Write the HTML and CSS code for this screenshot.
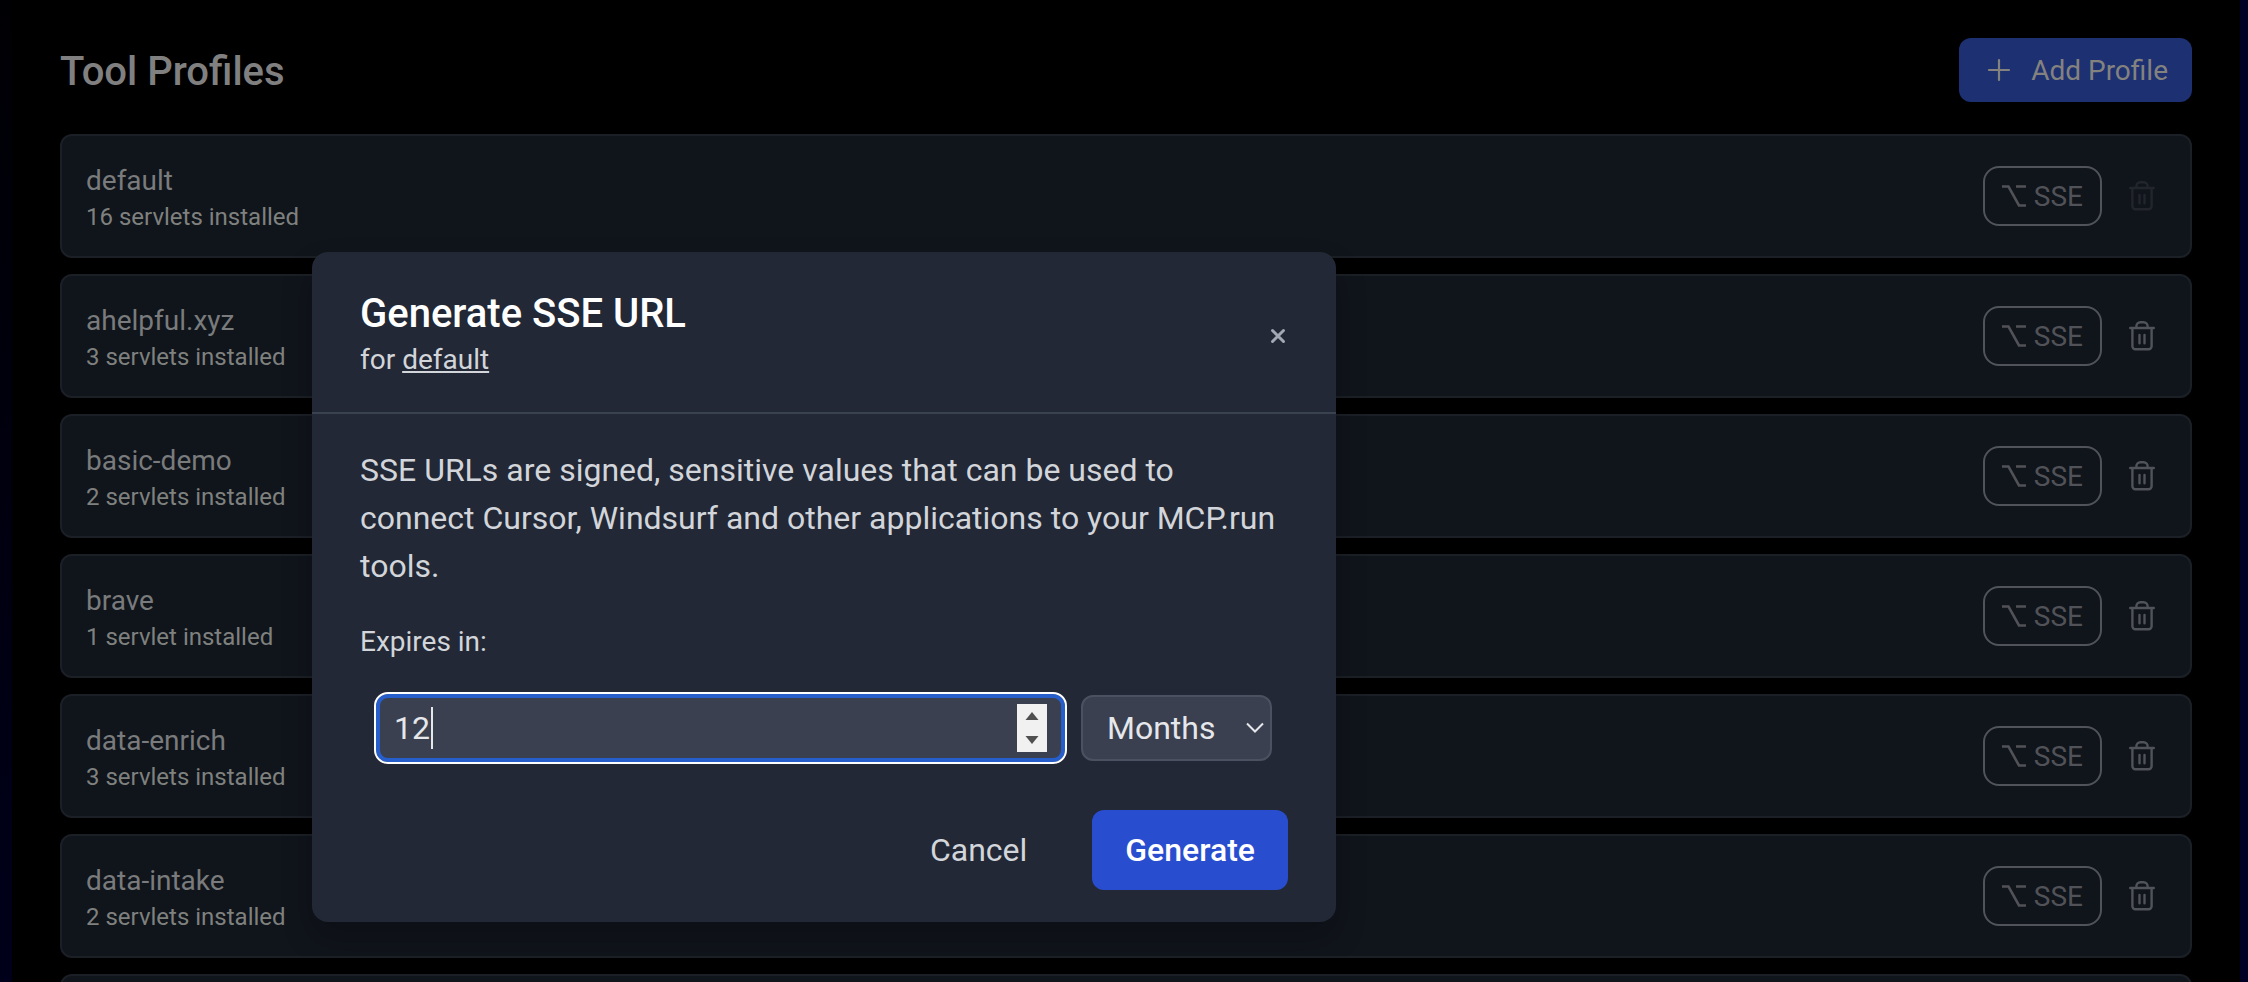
FILE: index.html
```html
<!DOCTYPE html>
<html lang="en">
<head>
<meta charset="utf-8">
<title>Tool Profiles</title>
<link rel="stylesheet" href="styles.css">
</head>
<body>
<svg class="sprite" aria-hidden="true">
  <symbol id="trash" viewBox="0 0 32 32">
    <g fill="none" stroke="currentColor" stroke-width="2.4" stroke-linecap="round" stroke-linejoin="round">
      <path d="M4.2 8h23.6M6.4 8v18.2a3 3 0 0 0 3 3h13.2a3 3 0 0 0 3-3V8M10.4 7.600V6.200a4 4 0 0 1 4-4h3.200a4 4 0 0 1 4 4v1.400M13.500 15v8.200M18.500 15v8.200"/>
    </g>
  </symbol>
  <symbol id="option" viewBox="0 0 24 22">
    <path d="M0 1.500h6.500L17 20.500h7M14 1.500h10" fill="none" stroke="currentColor" stroke-width="2.600"/>
  </symbol>
</svg>

<main class="panel">
  <header class="panel-header">
    <h1 class="panel-title">Tool Profiles</h1>
    <button class="add-button" type="button">
      <svg class="add-icon" viewBox="0 0 32 32" aria-hidden="true"><path d="M16 6v20M6 16h20" fill="none" stroke="currentColor" stroke-width="2.200" stroke-linecap="round"/></svg>
      Add Profile
    </button>
  </header>
  <ul class="profiles">
    <li class="profile">
      <div class="profile-text"><div class="profile-name">default</div><div class="profile-count">16 servlets installed</div></div>
      <button class="sse-button" type="button"><svg class="option-icon" aria-hidden="true"><use href="#option"/></svg>SSE</button>
      <button class="trash-button" type="button" aria-label="Delete default" disabled><svg class="trash-icon"><use href="#trash"/></svg></button>
    </li>
    <li class="profile">
      <div class="profile-text"><div class="profile-name">ahelpful.xyz</div><div class="profile-count">3 servlets installed</div></div>
      <button class="sse-button" type="button"><svg class="option-icon" aria-hidden="true"><use href="#option"/></svg>SSE</button>
      <button class="trash-button" type="button" aria-label="Delete ahelpful.xyz"><svg class="trash-icon"><use href="#trash"/></svg></button>
    </li>
    <li class="profile">
      <div class="profile-text"><div class="profile-name">basic-demo</div><div class="profile-count">2 servlets installed</div></div>
      <button class="sse-button" type="button"><svg class="option-icon" aria-hidden="true"><use href="#option"/></svg>SSE</button>
      <button class="trash-button" type="button" aria-label="Delete basic-demo"><svg class="trash-icon"><use href="#trash"/></svg></button>
    </li>
    <li class="profile">
      <div class="profile-text"><div class="profile-name">brave</div><div class="profile-count">1 servlet installed</div></div>
      <button class="sse-button" type="button"><svg class="option-icon" aria-hidden="true"><use href="#option"/></svg>SSE</button>
      <button class="trash-button" type="button" aria-label="Delete brave"><svg class="trash-icon"><use href="#trash"/></svg></button>
    </li>
    <li class="profile">
      <div class="profile-text"><div class="profile-name">data-enrich</div><div class="profile-count">3 servlets installed</div></div>
      <button class="sse-button" type="button"><svg class="option-icon" aria-hidden="true"><use href="#option"/></svg>SSE</button>
      <button class="trash-button" type="button" aria-label="Delete data-enrich"><svg class="trash-icon"><use href="#trash"/></svg></button>
    </li>
    <li class="profile">
      <div class="profile-text"><div class="profile-name">data-intake</div><div class="profile-count">2 servlets installed</div></div>
      <button class="sse-button" type="button"><svg class="option-icon" aria-hidden="true"><use href="#option"/></svg>SSE</button>
      <button class="trash-button" type="button" aria-label="Delete data-intake"><svg class="trash-icon"><use href="#trash"/></svg></button>
    </li>
    <li class="profile profile-empty"></li>
  </ul>
</main>

<div class="modal" role="dialog" aria-modal="true" aria-labelledby="modal-title">
  <header class="modal-header">
    <div>
      <h2 class="modal-title" id="modal-title">Generate SSE URL</h2>
      <p class="modal-subtitle">for <span class="modal-profile">default</span></p>
    </div>
    <button class="close-button" type="button" aria-label="Close">
      <svg class="close-icon" viewBox="0 0 20 20" aria-hidden="true"><path d="M4.500 4.500l11 11M15.500 4.500l-11 11" fill="none" stroke="currentColor" stroke-width="3" stroke-linecap="round"/></svg>
    </button>
  </header>
  <form class="modal-body">
    <p class="modal-text">SSE URLs are signed, sensitive values that can be used to connect Cursor, Windsurf and other applications to your MCP.run tools.</p>
    <label class="expiry-label" for="expiry">Expires in:</label>
    <div class="expiry-row">
      <div class="amount">
        <input class="amount-input" id="expiry" type="number" value="12">
        <span class="caret"></span>
        <svg class="spinner" viewBox="0 0 30 48" aria-hidden="true"><path fill="#f1f1f1" d="M0 0h30v48H0z"/><path fill="#505050" d="M8.500 16L15 8l6.500 8zM8.500 32L15 40l6.500-8z"/></svg>
      </div>
      <div class="unit">
        <select class="unit-select" aria-label="Unit"><option>Months</option></select>
        <svg class="unit-arrow" viewBox="0 0 18 12" aria-hidden="true"><path d="M1 1.500l8 8 8-8" fill="none" stroke="currentColor" stroke-width="2"/></svg>
      </div>
    </div>
    <div class="modal-actions">
      <button class="cancel-button" type="button">Cancel</button>
      <button class="generate-button" type="submit">Generate</button>
    </div>
  </form>
</div>
</body>
</html>
```
FILE: styles.css
```css
* { box-sizing: border-box; }

html { height: 100%; }

body {
  margin: 0;
  height: 100%;
  padding: 0 8px 0 12px;
  overflow: hidden;
  background:
    linear-gradient(#000024, #000024) right / 8px 100% no-repeat,
    linear-gradient(#000004, #00001a);
  font-family: Roboto, "Liberation Sans", sans-serif;
  font-size: 28px;
}

button, input, select { margin: 0; font: inherit; color: inherit; }
button { border: 0; background: none; padding: 0; }
h1, h2, p, ul { margin: 0; padding: 0; font-weight: 400; }

.sprite { position: absolute; width: 0; height: 0; }

.panel {
  height: 100%;
  padding: 38px 48px 0;
  overflow: hidden;
  background: #000;
}

.panel-header {
  display: flex;
  align-items: center;
  justify-content: space-between;
  margin-bottom: 32px;
}

.panel-title { padding-top: 4px; font-size: 40px; line-height: 48px; font-weight: 500; color: #808080; }

.add-button {
  display: flex;
  align-items: center;
  gap: 16px;
  height: 64px;
  padding: 0 24px;
  border-radius: 12px;
  background: #1c3072;
  color: #84827f;
}

.add-icon { width: 32px; height: 32px; }

.profiles { display: flex; flex-direction: column; gap: 16px; list-style: none; }

.profile {
  display: flex;
  align-items: center;
  min-height: 124px;
  padding: 22px 24px;
  border: 2px solid #1b1f26;
  border-radius: 12px;
  background: #10141b;
}

.profile-text { flex: 1; padding-top: 2px; }
.profile-name { line-height: 40px; color: #797b7c; }
.profile-count { font-size: 24px; line-height: 32px; color: #7f817f; }

.sse-button {
  display: flex;
  align-items: center;
  gap: 8px;
  height: 60px;
  padding: 0 17px;
  border: 2px solid #505359;
  border-radius: 16px;
  color: #505257;
}

.option-icon { width: 24px; height: 22px; }

.trash-button { display: flex; margin: 0 8px 0 24px; color: #505359; }
.trash-button:disabled { color: #22262c; }
.trash-icon { width: 32px; height: 32px; }

.modal {
  position: absolute;
  top: 252px;
  left: 312px;
  width: 1024px;
  border-radius: 16px;
  background: #222835;
  box-shadow: 0 16px 32px rgba(0, 0, 0, 0.2);
  color: #d2d5da;
}

.modal-header {
  display: flex;
  align-items: center;
  justify-content: space-between;
  padding: 38px 48px 30px;
  border-bottom: 2px solid #3a414f;
}

.modal-title { font-size: 40px; line-height: 48px; font-weight: 500; color: #fff; }
.modal-subtitle { line-height: 44px; }
.modal-profile { text-decoration: underline; text-decoration-thickness: 2px; text-underline-offset: 2px; }

.close-button { display: flex; color: #a2a8b4; }
.close-icon { width: 20px; height: 20px; }

.modal-body { padding: 32px 48px; }
.modal-text { font-size: 32px; line-height: 48px; }
.expiry-label { display: block; margin: 32px 0; line-height: 40px; }

.expiry-row {
  display: flex;
  align-items: center;
  gap: 16px;
  padding: 0 16px;
  font-size: 32px;
  color: #e5e7eb;
}

.amount { position: relative; display: flex; flex: 1; }

.amount-input {
  width: 100%;
  height: 68px;
  padding: 0 14px;
  border: 4px solid #265ecb;
  border-radius: 12px;
  outline: 2px solid #fff;
  background: #3a404f;
  appearance: textfield;
}

.amount-input::-webkit-inner-spin-button { display: none; }

.caret { position: absolute; top: 13px; left: 55px; width: 2px; height: 42px; background: #e5e7eb; }
.spinner { position: absolute; top: 10px; right: 18px; width: 30px; height: 48px; }

.unit { position: relative; }

.unit-select {
  display: block;
  width: 191px;
  height: 66px;
  padding: 0 24px;
  border: 2px solid #4b5160;
  border-radius: 12px;
  background: #3a404f;
  appearance: none;
}

.unit-arrow { position: absolute; top: 27px; right: 8px; width: 18px; height: 12px; }

.modal-actions {
  display: flex;
  justify-content: flex-end;
  gap: 32px;
  margin-top: 48px;
  font-size: 32px;
}

.cancel-button, .generate-button { height: 80px; padding: 0 33px; border-radius: 12px; }
.generate-button { background: #294dcf; color: #fff; font-weight: 500; }
```
